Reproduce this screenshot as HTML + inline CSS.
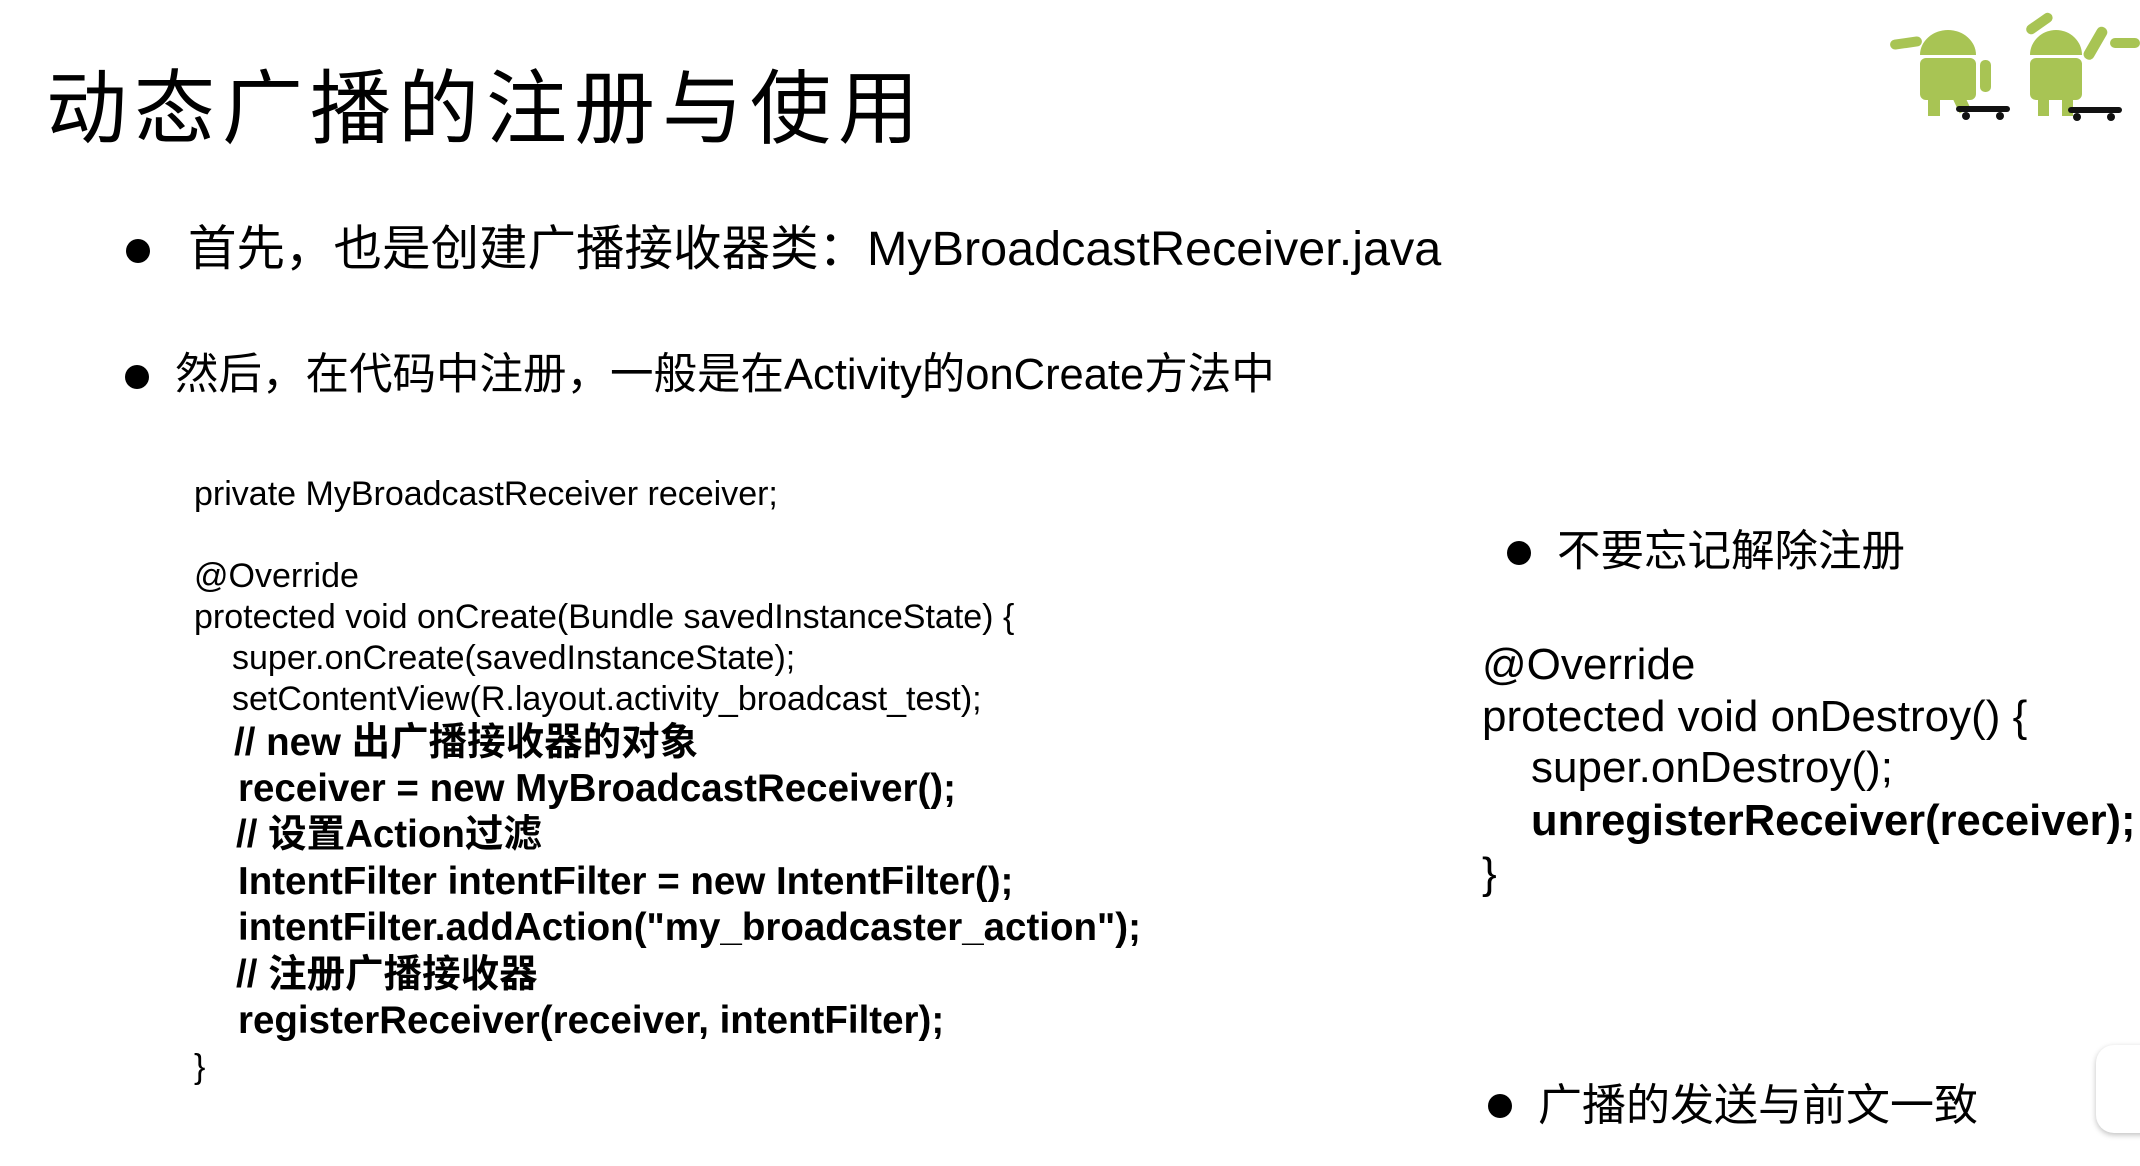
<!DOCTYPE html>
<html><head><meta charset="utf-8"><style>
body{margin:0;width:2140px;height:1166px;background:#fff;position:relative;overflow:hidden;font-family:"Liberation Sans","Noto Sans CJK SC",sans-serif;color:#000}
.a{position:absolute;white-space:nowrap;line-height:1}
.dot{position:absolute;width:24px;height:24px;border-radius:50%;background:#000}
.c{font-size:34px}
.b{font-size:38.5px;font-weight:bold}
</style></head><body>
<div class="a" style="left:46px;top:70px;font-size:81px;letter-spacing:7px">动态广播的注册与使用</div>

<div class="dot" style="left:126px;top:239px"></div>
<div class="a" style="left:188px;top:225px;font-size:48.5px">首先，也是创建广播接收器类：MyBroadcastReceiver.java</div>
<div class="dot" style="left:125px;top:365px"></div>
<div class="a" style="left:175px;top:354px;font-size:43.5px">然后，在代码中注册，一般是在Activity的onCreate方法中</div>

<div class="a c" style="left:194px;top:477px">private MyBroadcastReceiver receiver;</div>
<div class="a c" style="left:194px;top:559px">@Override</div>
<div class="a c" style="left:194px;top:600px">protected void onCreate(Bundle savedInstanceState) {</div>
<div class="a c" style="left:232px;top:641px">super.onCreate(savedInstanceState);</div>
<div class="a c" style="left:232px;top:682px">setContentView(R.layout.activity_broadcast_test);</div>
<div class="a b" style="left:234px;top:724px">// new 出广播接收器的对象</div>
<div class="a b" style="left:238px;top:770px">receiver = new MyBroadcastReceiver();</div>
<div class="a b" style="left:236px;top:816px">// 设置Action过滤</div>
<div class="a b" style="left:238px;top:863px">IntentFilter intentFilter = new IntentFilter();</div>
<div class="a b" style="left:238px;top:909px">intentFilter.addAction("my_broadcaster_action");</div>
<div class="a b" style="left:236px;top:956px">// 注册广播接收器</div>
<div class="a b" style="left:238px;top:1002px">registerReceiver(receiver, intentFilter);</div>
<div class="a c" style="left:194px;top:1050px">}</div>

<div class="dot" style="left:1507px;top:541px"></div>
<div class="a" style="left:1557px;top:531px;font-size:43.5px">不要忘记解除注册</div>
<div class="a" style="left:1482px;top:643px;font-size:44px">@Override</div>
<div class="a" style="left:1482px;top:695px;font-size:44px">protected void onDestroy() {</div>
<div class="a" style="left:1531px;top:746px;font-size:44px">super.onDestroy();</div>
<div class="a" style="left:1531px;top:800px;font-size:43.5px;font-weight:bold">unregisterReceiver(receiver);</div>
<div class="a" style="left:1482px;top:852px;font-size:44px">}</div>

<div class="dot" style="left:1488px;top:1094px"></div>
<div class="a" style="left:1538px;top:1084px;font-size:44px">广播的发送与前文一致</div>

<svg style="position:absolute;left:1880px;top:0" width="260" height="130" viewBox="0 0 260 130">
<g fill="#a8c454">
<path d="M40 55 a28 25 0 0 1 56 0z"/><rect x="40" y="58" width="56" height="42" rx="6"/>
<rect x="48" y="96" width="12" height="20"/><rect x="74" y="90" width="12" height="22" transform="rotate(-25 80 100)"/>
<rect x="100" y="60" width="11" height="32" rx="5"/>
<rect x="10" y="38" width="32" height="10" rx="5" transform="rotate(-8 26 43)"/>
<path d="M150 55 a26 25 0 0 1 52 0z"/><rect x="150" y="58" width="52" height="42" rx="6"/>
<rect x="158" y="96" width="11" height="20"/><rect x="182" y="96" width="11" height="20"/>
<rect x="160" y="42" width="30" height="10" rx="5" transform="rotate(-35 130 60)"/>
<rect x="210" y="25" width="11" height="36" rx="5" transform="rotate(30 215 43)"/>
<rect x="230" y="38" width="30" height="10" rx="5"/>
</g>
<g fill="#111"><rect x="76" y="106" width="54" height="6" rx="3"/><circle cx="86" cy="116" r="4"/><circle cx="120" cy="116" r="4"/>
<rect x="188" y="107" width="54" height="6" rx="3"/><circle cx="197" cy="117" r="4"/><circle cx="231" cy="117" r="4"/></g>
</svg>
<div style="position:absolute;left:2096px;top:1045px;width:80px;height:88px;border-radius:18px;background:#fff;box-shadow:0 2px 6px rgba(0,0,0,.25)"></div>
</body></html>
